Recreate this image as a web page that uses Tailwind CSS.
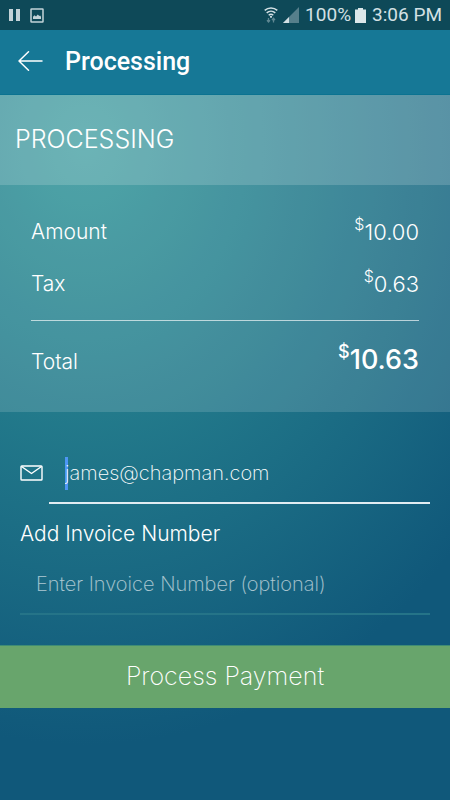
<!DOCTYPE html>
<html lang="en">
<head>
<meta charset="utf-8">
<meta name="viewport" content="width=device-width, initial-scale=1">
<title>Processing</title>
<script src="https://cdn.jsdelivr.net/npm/@tailwindcss/browser@4"></script>
</head>
<body class="flex min-h-screen flex-col bg-[#10587a] font-['Inter',sans-serif] font-light text-white">
  <div class="flex h-[30px] items-center justify-between bg-[#0e4958] pr-2 pl-[9px] font-['Roboto',sans-serif] text-[19px] font-normal text-[#d3e0e4]">
    <div class="flex items-center gap-[10px]">
      <svg class="h-3 w-[11px]" viewBox="0 0 11 12" fill="#c3d3d8" aria-hidden="true"><path d="M0 0h4v12H0zM7 0h4v12H7z"/></svg>
      <svg class="h-[15px] w-[14px]" viewBox="0 0 14 15" aria-hidden="true"><rect x="1" y="1" width="12" height="13" rx="0.5" fill="none" stroke="#c3d3d8" stroke-width="1.500"/><path d="M3 11V8.800l1.500-1.600 1.500 1.200L7.800 6.500l1.500 1.400.8-.4.900 1.300V11z" fill="#c3d3d8"/></svg>
    </div>
    <div class="flex items-center">
      <svg class="mr-[5px] h-4 w-[14px]" viewBox="0 0 14 16" fill="none" stroke="#d3e0e4" stroke-width="1.500" aria-hidden="true"><path d="M.7 3.400C4.300.1 9.700.1 13.300 3.400M2.700 5.900c2.500-2.200 6.100-2.200 8.600 0M4.700 8.200c1.400-1.200 3.200-1.200 4.600 0"/><circle cx="7" cy="9.800" r="1.100" fill="#d3e0e4" stroke="none"/><path d="M4.500 11v4M3 13.300l1.500 1.700L6 13.300M9.500 15.500v-4M8 13l1.500-1.700L11 13" stroke="#5f8792" stroke-width="1.300"/></svg>
      <svg class="mr-[6px] h-4 w-4" viewBox="0 0 16 16" aria-hidden="true"><path d="M16 0v16H0z" fill="#567f8b"/><path d="M6 10v6H0z" fill="#d3e0e4"/></svg>
      <span>100%</span>
      <svg class="mr-[6px] ml-1 h-[15px] w-[11px]" viewBox="0 0 11 15" fill="#dce7ea" aria-hidden="true"><path d="M3 0h5v1.500h3V15H0V1.500h3z"/></svg>
      <span>3:06 PM</span>
    </div>
  </div>

  <header class="flex h-[65px] items-center gap-[22px] border-b border-[#0b7391] bg-[#167896] px-[18px] pb-px font-['Roboto',sans-serif]">
    <button type="button" aria-label="Back" class="h-[22px] w-[25px]">
      <svg viewBox="0 0 25 22" fill="none" stroke="#fff" stroke-width="1.500" stroke-linecap="round" stroke-linejoin="round" aria-hidden="true"><path d="M10.500.800 1 10l9.500 9.200M1 10h23"/></svg>
    </button>
    <h1 class="text-[25px] leading-8 font-medium">Processing</h1>
  </header>

  <main class="flex-1 bg-[radial-gradient(500px_600px_at_85px_50px,#329699,#10587a)]">
    <div class="flex h-[90px] items-center bg-white/28 px-[15px] pb-[2px]">
      <h2 class="text-[25px] leading-8 font-light">PROCESSING</h2>
    </div>

    <dl class="bg-white/14 px-[31px] pt-[21px] pb-[34px] text-[22px]">
      <div class="flex h-[52px] items-center justify-between"><dt class="text-[21px]">Amount</dt><dd class="flex items-center"><span class="mb-4 text-[16px] leading-4">$</span>10.00</dd></div>
      <div class="flex h-[52px] items-center justify-between"><dt class="text-[21px]">Tax</dt><dd class="flex items-center"><span class="mb-4 text-[16px] leading-4">$</span>0.63</dd></div>
      <div class="mt-[10px] flex h-[58px] items-end justify-between border-t border-white/65"><dt class="text-[21px] leading-8">Total</dt><dd class="flex items-center text-[27px] leading-9 font-medium"><span class="mb-4 text-[18px] leading-4">$</span>10.63</dd></div>
    </dl>

    <form class="pt-[37px]">
      <div class="px-5">
        <div class="flex items-center pb-[5px]">
          <label for="email" aria-label="Email address" class="w-[45px]">
            <svg class="h-4 w-[23px]" viewBox="0 0 23 16" fill="none" stroke="#fff" stroke-width="1.400" stroke-linejoin="round" aria-hidden="true"><rect x="1" y="1" width="21" height="14" rx="0.800"/><path d="m1.500 1.500 10 7 10-7"/></svg>
          </label>
          <div class="relative h-12 flex-1">
            <span class="absolute top-2 left-0 h-[33px] w-[3px] bg-[#4d96f5]"></span>
            <input id="email" type="email" value="james@chapman.com" class="relative h-12 w-full bg-transparent text-[20px] font-extralight outline-none">
          </div>
        </div>
        <div class="ml-[29px] h-[2px] bg-[#e1ecf2]"></div>
        <label for="invoice" class="mt-[14px] block text-[21px] leading-8 font-light">Add Invoice Number</label>
        <input id="invoice" type="text" placeholder="Enter Invoice Number (optional)" class="mt-[5px] h-[60px] w-full border-b-2 border-[#257488] bg-transparent px-4 text-[20px] font-extralight outline-none placeholder:text-white/65">
      </div>
      <button type="submit" class="mt-[30px] h-[63px] w-full border-t border-[#3f8c74] bg-[#68a56c] text-[25px] font-extralight">Process Payment</button>
    </form>
  </main>
</body>
</html>
